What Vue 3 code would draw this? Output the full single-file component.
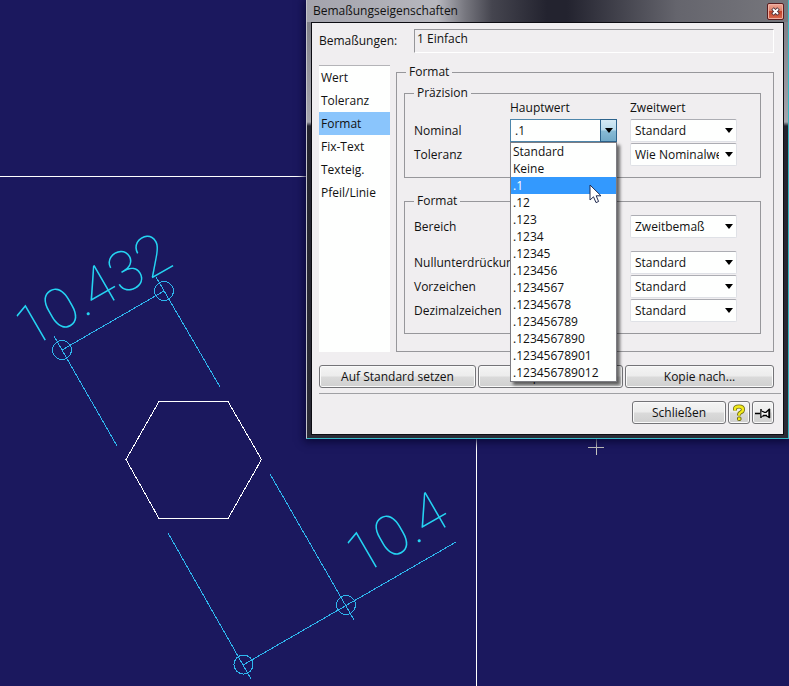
<script setup>
import { ref } from 'vue'

const categories = ['Wert', 'Toleranz', 'Format', 'Fix-Text', 'Texteig.', 'Pfeil/Linie']
const category = ref('Format')

const precisions = [
  'Standard', 'Keine', '.1', '.12', '.123', '.1234', '.12345', '.123456', '.1234567',
  '.12345678', '.123456789', '.1234567890', '.12345678901', '.123456789012',
]
const nominal = ref('.1')

const formatRows = [
  { id: 'bereich', label: 'Bereich', value: 'Zweitbemaß', spaced: true },
  { id: 'nullen', label: 'Nullunterdrückung', value: 'Standard' },
  { id: 'vorzeichen', label: 'Vorzeichen', value: 'Standard' },
  { id: 'dezimal', label: 'Dezimalzeichen', value: 'Standard' },
]
</script>

<template>
  <main class="desktop">
    <svg class="drawing" role="img" aria-label="Zeichnung mit Bemaßung">
      <g class="guide">
        <line x1="0" y1="176.5" x2="310" y2="176.5" />
        <line x1="476.5" y1="430" x2="476.5" y2="100%" />
        <path d="M159 401.500H228L261.500 459.500L228 518.500H159L126 459.500Z" />
      </g>
      <text class="measure" transform="translate(30 349) rotate(-30)">10.432</text>
      <text class="measure" transform="translate(361 576) rotate(-30)">10.4</text>
      <g class="dimension">
        <path d="M62 350L164 291M54 336L117 446M156 277L220 387" />
        <circle cx="62" cy="350" r="9.500" />
        <circle cx="164" cy="291" r="9.500" />
        <path d="M243 665L456 542M270 474L354 620M168 533L251 679" />
        <circle cx="346" cy="605" r="9.500" />
        <circle cx="243.500" cy="664.500" r="9.500" />
      </g>
      <path class="cross" d="M588 447.500H604M596.500 439V455" />
    </svg>

    <section class="dialog" role="dialog" aria-labelledby="title">
      <header class="titlebar">
        <h1 id="title">Bemaßungseigenschaften</h1>
        <button class="close" type="button" aria-label="Fenster schließen">
          <svg width="9" height="9" viewBox="0 0 9 9">
            <path d="M1.500 1.500L7.500 7.500M7.500 1.500L1.500 7.500" stroke="#4a3038" stroke-width="3.600" />
            <path d="M2 2L7 7M7 2L2 7" stroke="#fff" stroke-width="1.800" />
          </svg>
        </button>
      </header>

      <form class="content" @submit.prevent>
        <div class="name-row">
          <label for="name">Bemaßungen:</label>
          <input id="name" type="text" value="1 Einfach" readonly />
        </div>

        <div class="body">
          <nav class="categories">
            <button
              v-for="c in categories"
              :key="c"
              type="button"
              :class="{ active: c === category }"
              @click="category = c"
            >{{ c }}</button>
          </nav>

          <fieldset class="outer">
            <legend>Format</legend>

            <fieldset class="group">
              <legend>Präzision</legend>
              <div class="grid">
                <span class="head main">Hauptwert</span>
                <span class="head second">Zweitwert</span>

                <label for="nominal">Nominal</label>
                <div class="combo">
                  <select id="nominal" v-model="nominal" class="open">
                    <option v-for="p in precisions" :key="p">{{ p }}</option>
                  </select>
                  <span class="drop"><svg width="8" height="5"><path d="M0 0H8L4 5Z" /></svg></span>
                  <ul class="popup" role="listbox">
                    <li
                      v-for="p in precisions"
                      :key="p"
                      role="option"
                      :aria-selected="p === nominal"
                      :class="{ selected: p === nominal }"
                      @click="nominal = p"
                    >
                      {{ p }}
                      <svg v-if="p === nominal" class="pointer" width="13" height="20" viewBox="0 0 13 20">
                        <path d="M1 1V16L4.500 12.800L7 18.600L9.600 17.500L7.200 11.800H12Z" fill="#fff" stroke="#222c50" />
                      </svg>
                    </li>
                  </ul>
                </div>
                <div class="combo">
                  <select aria-label="Nominal Zweitwert"><option>Standard</option></select>
                  <span class="drop"><svg width="8" height="5"><path d="M0 0H8L4 5Z" /></svg></span>
                </div>

                <label for="toleranz">Toleranz</label>
                <div class="combo last">
                  <select id="toleranz"><option>Wie Nominalwert</option></select>
                  <span class="drop"><svg width="8" height="5"><path d="M0 0H8L4 5Z" /></svg></span>
                </div>
              </div>
            </fieldset>

            <fieldset class="group">
              <legend>Format</legend>
              <div class="grid lower">
                <template v-for="row in formatRows" :key="row.id">
                  <label :for="row.id" :class="{ spaced: row.spaced }">{{ row.label }}</label>
                  <div class="combo last" :class="{ spaced: row.spaced }">
                    <select :id="row.id"><option>{{ row.value }}</option></select>
                    <span class="drop"><svg width="8" height="5"><path d="M0 0H8L4 5Z" /></svg></span>
                  </div>
                </template>
              </div>
            </fieldset>
          </fieldset>
        </div>

        <div class="actions">
          <button class="push" type="button">Auf Standard setzen</button>
          <button class="push" type="button">Kopie von...</button>
          <button class="push" type="button">Kopie nach...</button>
        </div>

        <footer class="footer">
          <button class="push wide" type="button">Schließen</button>
          <button class="push icon" type="button" aria-label="Hilfe">
            <svg width="14" height="18" viewBox="0 0 14 18" fill="none" stroke-linejoin="round">
              <path d="M3 6.500V5Q3 2.500 7 2.500Q11 2.500 11 5.500Q11 7.500 8.500 8.500Q7 9.200 7 11.500" stroke="#6d6a10" stroke-width="4" />
              <path d="M3 6.500V5Q3 2.500 7 2.500Q11 2.500 11 5.500Q11 7.500 8.500 8.500Q7 9.200 7 11.500" stroke="#f2ea1c" stroke-width="2.400" />
              <rect x="5.500" y="13" width="3.500" height="3.500" rx="1" fill="#f2ea1c" stroke="#6d6a10" />
            </svg>
          </button>
          <button class="push icon" type="button" aria-label="Anheften">
            <svg width="16" height="12" viewBox="0 0 16 12" fill="none" stroke="#000">
              <path d="M0 6.500H5" stroke-width="1.500" />
              <path d="M6 2V11" stroke-width="1.500" />
              <path d="M6.500 4L9.500 5.300H11L14 2.500V10.500L11 8.500H9.500L6.500 9.500" fill="#f4f4f4" stroke-width="1.200" />
              <path d="M8 8.500H12" stroke-width="1.500" />
              <path d="M14.500 2V11" stroke-width="1.500" />
            </svg>
          </button>
        </footer>
      </form>
    </section>
  </main>
</template>

<style>
body {
  margin: 0;
}
</style>

<style scoped>
* {
  box-sizing: border-box;
}

.desktop {
  position: relative;
  min-height: 100vh;
  overflow: hidden;
  background: #1b185e;
  color: #111;
  font: 12px/16px "Open Sans", "Noto Sans", sans-serif;
}

.drawing {
  position: absolute;
  inset: 0;
  width: 100%;
  height: 100%;
  fill: none;
}

.guide {
  stroke: #fff;
  shape-rendering: crispEdges;
}

.dimension {
  stroke: #2fb6ee;
  shape-rendering: crispEdges;
}

.cross {
  stroke: #c8c8c0;
}

.measure {
  fill: #25d4f2;
  font: 100 57px Roboto, "Open Sans", sans-serif;
}

.dialog {
  position: absolute;
  top: 0;
  right: 0;
  width: 483px;
  padding: 0 4px 3px;
  border: 1px solid #35b9c4;
  border-width: 0 1px 1px;
  border-left-color: #c4c4cc;
  background: linear-gradient(#77777f 0, #a5a5ac 122px, #23232e 126px, #2b2b36 100%);
  box-shadow: 0 1px 8px 2px #0a0838;
}

.titlebar {
  display: flex;
  align-items: center;
  justify-content: space-between;
  height: 22px;
  margin: 0 -4px;
  padding: 0 4px 0 6px;
  background: linear-gradient(90deg, #a3a3ac 0, #b7b7be 130px, #77777f 158px, #45454f 185px, #23232f 240px, #23232f 260px, #65656d 370px, #77777d 100%);
}

h1 {
  margin: 0;
  font-size: 12px;
  font-weight: 400;
}

.close {
  display: grid;
  place-items: center;
  width: 17px;
  height: 17px;
  padding: 0;
  border: 1px solid #5b1e20;
  border-radius: 2px;
  background: linear-gradient(#eea695 0, #dd7f68 45%, #c1432b 50%, #d9694e 100%);
  box-shadow: inset 0 0 0 1px #eeb0a4;
}

.content {
  padding: 6px 9px 10px 7px;
  border: 1px solid #fff;
  outline: 1px solid #0c0c12;
  outline-offset: -1px;
  background: #f0eef0;
}

.name-row {
  display: flex;
  align-items: center;
}

.name-row label {
  width: 95px;
}

.name-row input {
  flex: 1;
  min-width: 0;
  height: 24px;
  padding: 0 2px 5px;
  border: 1px solid #fff;
  border-top-color: #96969a;
  border-left-color: #96969a;
  outline: 0;
  background: transparent;
  color: inherit;
  font: inherit;
}

.body {
  display: flex;
  gap: 6px;
  margin-top: 12px;
}

.categories {
  display: flex;
  flex-direction: column;
  width: 71px;
  border-top: 1px solid #b4b4b8;
  background: #fefffe;
}

.categories button {
  height: 23px;
  padding: 0 2px;
  border: 0;
  background: none;
  color: inherit;
  font: inherit;
  text-align: left;
}

.categories .active {
  background: #8ac5fc;
}

fieldset {
  min-width: 0;
  margin: 0;
  border: 1px solid #97979b;
}

legend {
  padding: 0 3px;
  line-height: 14px;
}

.outer {
  flex: 1;
  padding: 7px 12px 17px 7px;
}

.outer > legend {
  margin-left: 2px;
}

.group {
  padding: 0 9px 11px;
}

.group + .group {
  margin-top: 16px;
}

.grid {
  display: grid;
  grid-template-columns: 83px 107px 107px;
  column-gap: 13px;
  row-gap: 1px;
  align-items: center;
}

.lower {
  padding-top: 7px;
}

.grid label {
  white-space: nowrap;
}

.head {
  margin-bottom: 2px;
}

.main {
  grid-column: 2;
}

.last {
  grid-column: 3;
}

.spaced {
  margin-bottom: 12px;
}

.combo {
  position: relative;
}

.combo select {
  display: block;
  width: 100%;
  height: 23px;
  padding: 0 17px 0 4px;
  border: 1px solid #dfe1e6;
  border-top-color: #acadb3;
  border-radius: 2px;
  outline: 0;
  appearance: none;
  background: #fefffe;
  color: inherit;
  font: inherit;
}

.combo .open {
  border-color: #4d86ab;
  border-radius: 0;
}

.drop {
  position: absolute;
  top: 0;
  right: 0;
  bottom: 0;
  display: grid;
  place-items: center;
  width: 17px;
  pointer-events: none;
}

.open + .drop {
  border: 1px solid #2c628b;
  background: linear-gradient(#d5eaf5 0, #b9dbec 48%, #88bbd5 52%, #72aac8 100%);
}

.popup {
  position: absolute;
  top: 100%;
  left: 0;
  z-index: 2;
  width: 100%;
  margin: 0;
  padding: 0;
  border: 1px solid #7c7c82;
  background: #fefffe;
  box-shadow: 3px 3px 3px #00000090;
  list-style: none;
}

.popup li {
  position: relative;
  height: 17px;
  padding-left: 2px;
  line-height: 17px;
}

.popup .selected {
  background: #3399fe;
  color: #fff;
}

.pointer {
  position: absolute;
  top: 7px;
  left: 78px;
  z-index: 1;
}

.actions {
  display: grid;
  grid-template-columns: 157fr 145fr 149fr;
  gap: 2px;
  margin-top: 13px;
}

.push {
  height: 23px;
  padding: 0;
  border: 1px solid #747478;
  border-radius: 3px;
  background: linear-gradient(#f4f4f4 0, #ececec 48%, #dadada 52%, #d0d0d0 100%);
  box-shadow: inset 0 0 0 1px #fafafa;
  color: inherit;
  font: inherit;
}

.footer {
  display: flex;
  justify-content: flex-end;
  gap: 2px;
  margin: 5px -7px 0 0;
  padding: 7px 7px 0 0;
  border-top: 1px solid #a0a0a4;
}

.wide {
  width: 94px;
}

.icon {
  display: grid;
  place-items: center;
  width: 22px;
}
</style>
